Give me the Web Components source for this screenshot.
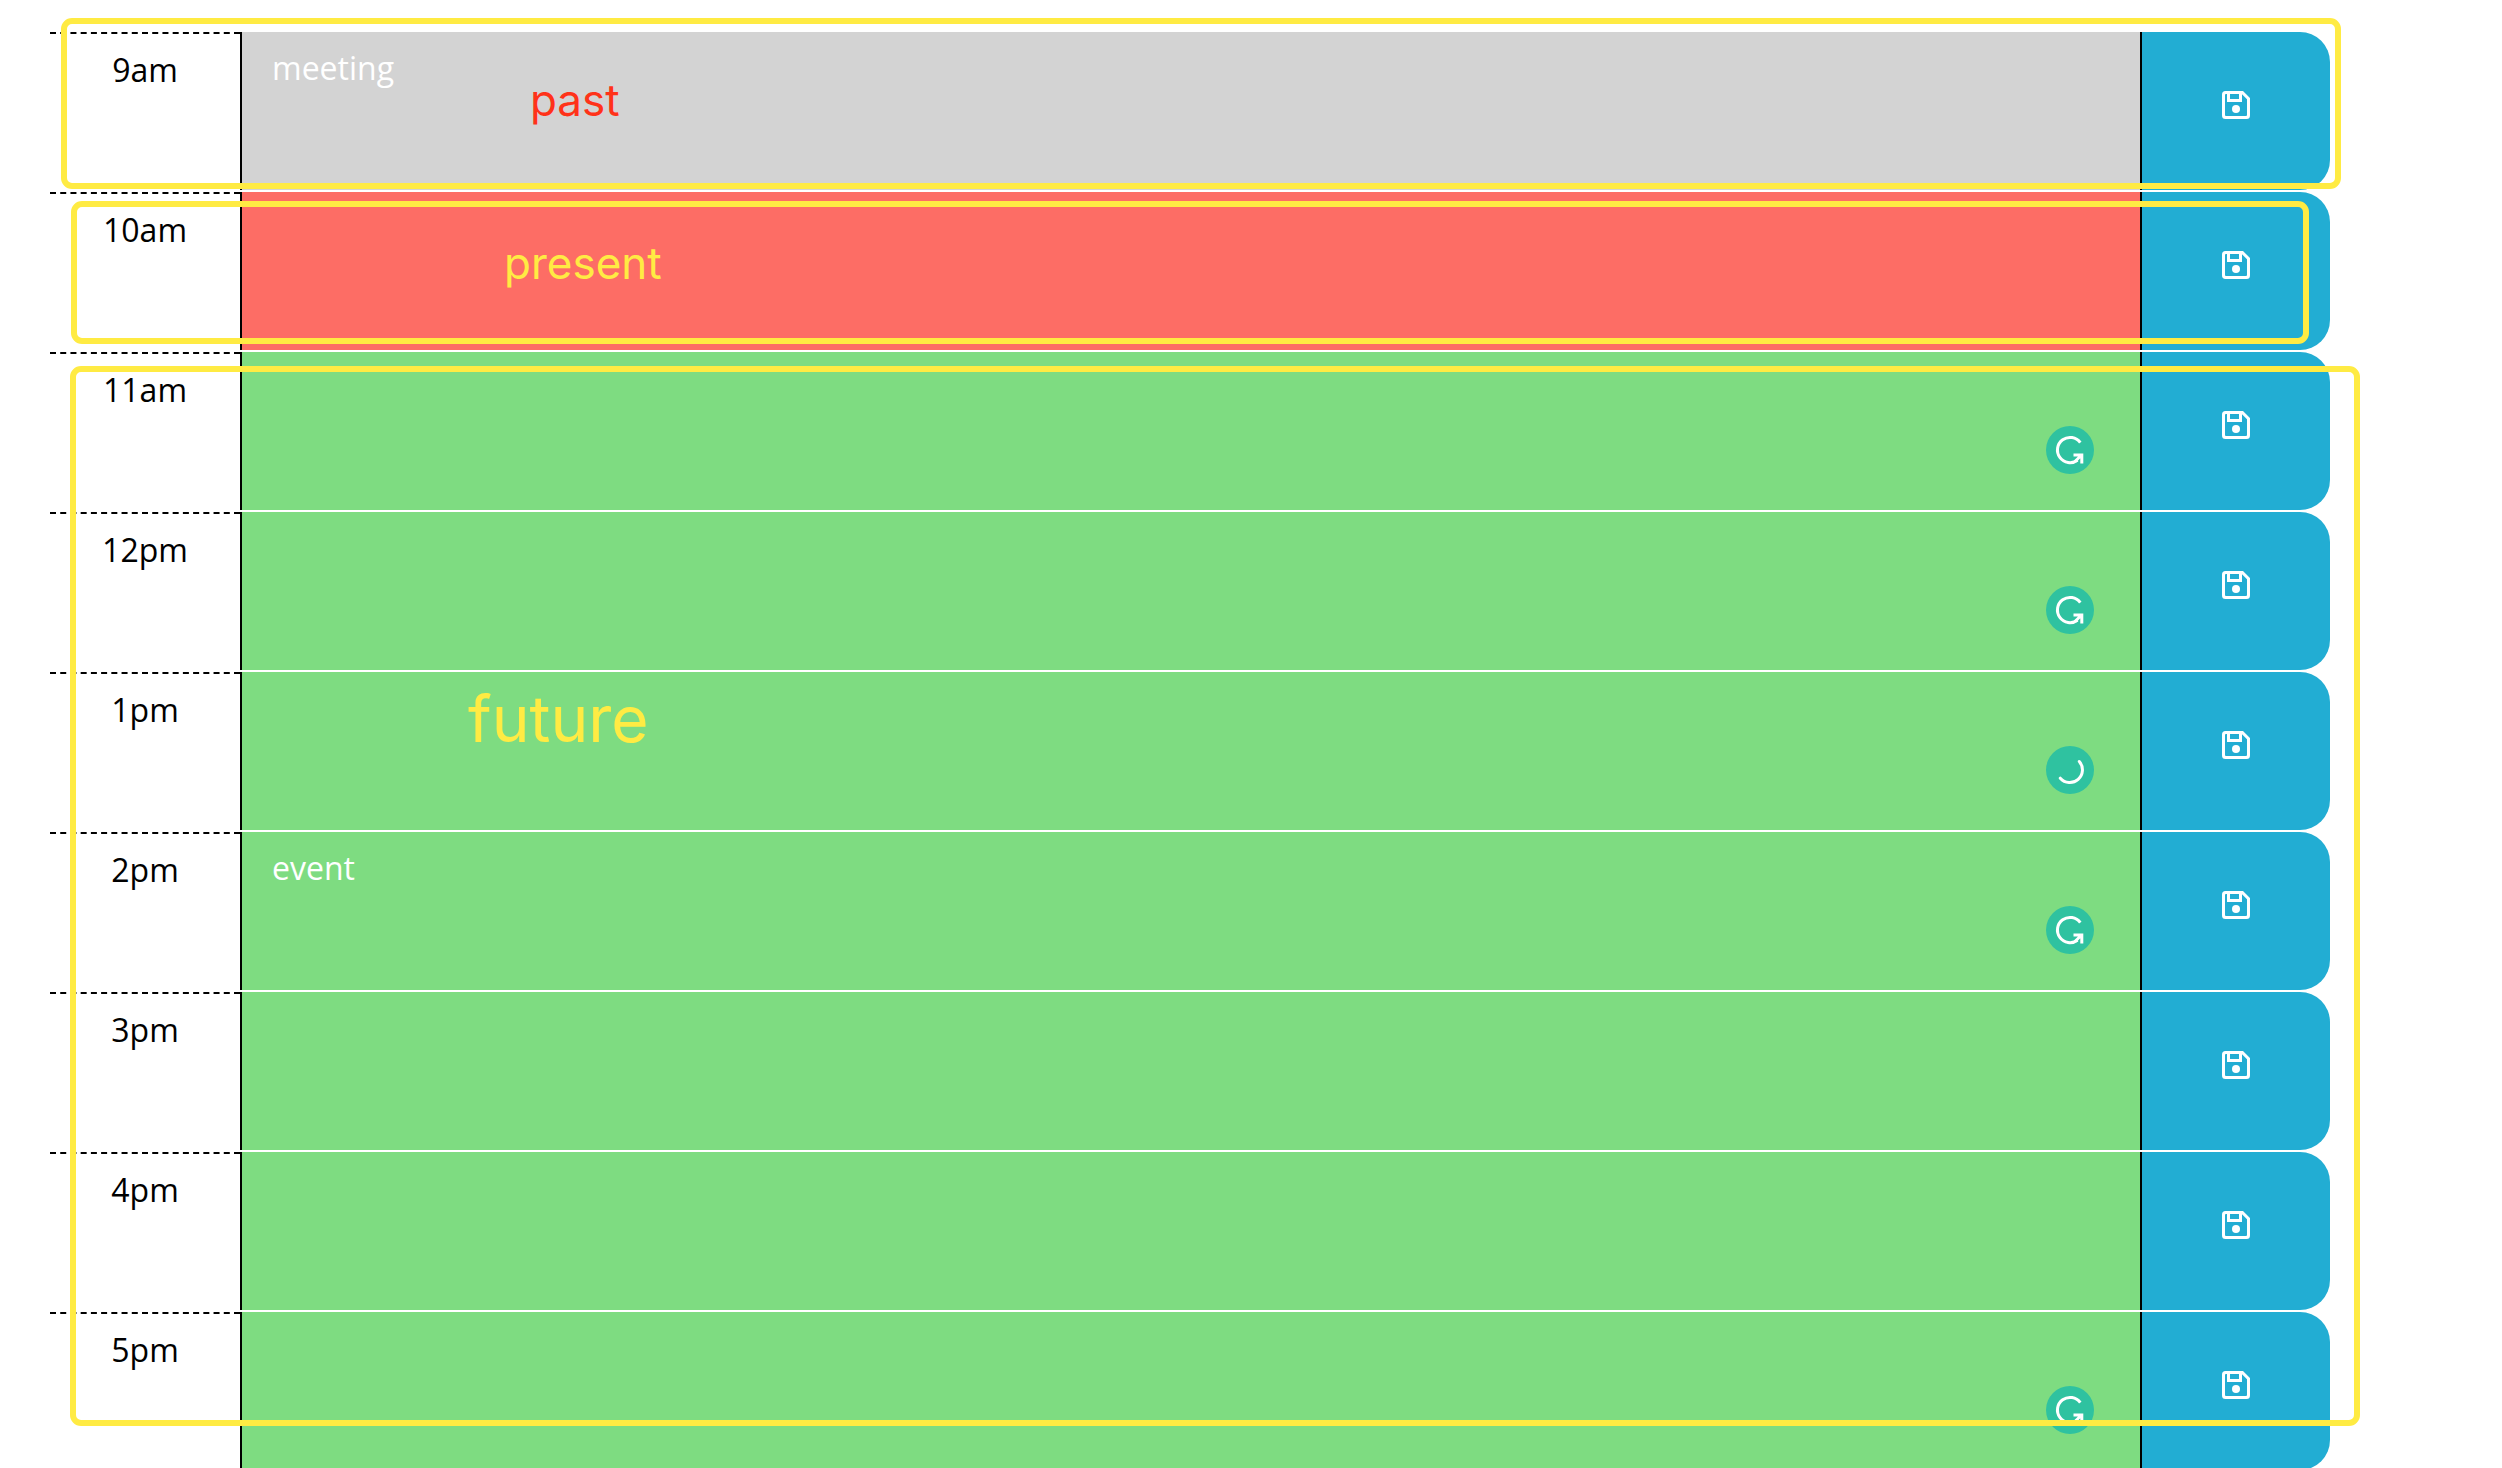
<!DOCTYPE html>
<html lang="en">
<head>
<meta charset="utf-8">
<title>Work Day Scheduler</title>
<style>
  html { scrollbar-width: none; background: #fff; }
  body { margin: 0; padding: 32px 172px 0 50px; font: 32px/48px "Open Sans", sans-serif; color: #000; }
</style>
</head>
<body>
<day-planner>
  <time-block hour="9am" state="past">meeting</time-block>
  <time-block hour="10am" state="present"></time-block>
  <time-block hour="11am" state="future" badge="g"></time-block>
  <time-block hour="12pm" state="future" badge="g"></time-block>
  <time-block hour="1pm" state="future" badge="busy"></time-block>
  <time-block hour="2pm" state="future" badge="g">event</time-block>
  <time-block hour="3pm" state="future"></time-block>
  <time-block hour="4pm" state="future"></time-block>
  <time-block hour="5pm" state="future" badge="g"></time-block>
  <mark-box slot="notes" class="past"><span>past</span></mark-box>
  <mark-box slot="notes" class="present"><span>present</span></mark-box>
  <mark-box slot="notes" class="future"><span>future</span></mark-box>
</day-planner>

<script>
class DayPlanner extends HTMLElement {
  constructor() {
    super();
    this.attachShadow({ mode: 'open' }).innerHTML = `
      <style>
        :host { display: block; position: relative; }
        main { display: flex; flex-direction: column; gap: 2px; }
        ::slotted(mark-box) { position: absolute; }
        ::slotted(.past) { left: 11px; right: -11px; top: -14px; height: 171px; --ink: #ff3219; --size: 44px; --x: 463px; --y: 50px; }
        ::slotted(.present) { left: 21px; right: 21px; top: 169px; height: 143px; --size: 44px; --x: 427px; --y: 30px; }
        ::slotted(.future) { left: 20px; right: -30px; top: 334px; height: 1060px; --size: 64px; --x: 392px; --y: 309px; }
      </style>
      <main><slot></slot></main>
      <slot name="notes"></slot>`;
  }
}

class MarkBox extends HTMLElement {
  constructor() {
    super();
    this.attachShadow({ mode: 'open' }).innerHTML = `
      <style>
        :host { display: block; box-sizing: border-box; border: 6px solid #ffeb43; border-radius: 11px;
          padding: var(--y) 0 0 var(--x); pointer-events: none;
          color: var(--ink, #ffeb43); font: var(--size)/1.2 Inter, sans-serif; }
      </style>
      <slot></slot>`;
  }
}

class SaveIcon extends HTMLElement {
  constructor() {
    super();
    this.attachShadow({ mode: 'open' }).innerHTML = `
      <style>:host { display: block; width: 28px; height: 28px; } svg { display: block; }</style>
      <svg width="28" height="28" viewBox="0 0 28 28" fill="#fff" aria-hidden="true">
        <path fill-rule="evenodd" d="M4 0H21L28 7V24.500a3.500 3.500 0 0 1-3.500 3.500H3.500A3.500 3.500 0 0 1 0 24.500V3.500A3.500 3.500 0 0 1 3.500 0zM4 3a1 1 0 0 0-1 1V24a1 1 0 0 0 1 1H24a1 1 0 0 0 1-1V8.300L20 3.300V11H5V3zM8 3V8H17V3z"/>
        <circle cx="14" cy="18" r="4"/>
      </svg>`;
  }
}

class WritingBadge extends HTMLElement {
  connectedCallback() {
    const busy = this.getAttribute('kind') === 'busy';
    const drawing = busy
      ? '<path d="M33.300 15.500A12.600 12.600 0 0 1 14.300 32.200"/>'
      : '<path d="M34.300 16.700A12.600 12.600 0 1 0 31.500 34.200"/><path d="M27.500 29H35.800V37.500M35 29.500L29 35.500"/>';
    this.attachShadow({ mode: 'open' }).innerHTML = `
      <style>:host { display: block; width: 48px; height: 48px; } svg { display: block; }</style>
      <svg width="48" height="48" viewBox="0 0 48 48" fill="none" stroke="#fff" stroke-width="3" aria-hidden="true">
        <circle cx="24" cy="24" r="24" fill="#2fc2a0" stroke="none"/>${drawing}
      </svg>`;
    if (busy) this.shadowRoot.querySelector('path').setAttribute('stroke-linecap', 'round');
  }
}

class TimeBlock extends HTMLElement {
  connectedCallback() {
    const hour = this.getAttribute('hour');
    const badge = this.getAttribute('badge');
    this.attachShadow({ mode: 'open' }).innerHTML = `
      <style>
        :host { display: grid; grid-template-columns: 1fr 10fr 1fr; min-height: 158px; }
        :host([state="past"]) { --fill: #d3d3d3; }
        :host([state="present"]) { --fill: #fd6d65; }
        :host([state="future"]) { --fill: #7edc81; }
        label { border-top: 2px dashed #000; padding-top: 12px; text-align: center; }
        .entry { position: relative; display: flex; min-width: 0; }
        textarea { flex: 1; min-width: 0; box-sizing: border-box; height: 100%; margin: 0; padding: 12px 30px;
          border: 0; border-left: 2px solid #000; border-radius: 0; outline: 0; resize: none; overflow: hidden;
          background: var(--fill); color: #fff; font: inherit; }
        writing-badge { position: absolute; right: 46px; bottom: 36px; }
        button { display: flex; align-items: center; justify-content: center; margin: 0; padding: 0 0 12px;
          border: 0; border-left: 2px solid #000; border-radius: 0 30px 30px 0; background: #22add3; cursor: pointer; }
      </style>
      <label for="entry">${hour}</label>
      <div class="entry">
        <textarea id="entry" spellcheck="false"></textarea>
        ${badge ? `<writing-badge kind="${badge}"></writing-badge>` : ''}
      </div>
      <button type="button" aria-label="Save ${hour}"><save-icon></save-icon></button>`;
    this.shadowRoot.querySelector('textarea').textContent = this.textContent.trim();
  }
}

customElements.define('save-icon', SaveIcon);
customElements.define('writing-badge', WritingBadge);
customElements.define('time-block', TimeBlock);
customElements.define('mark-box', MarkBox);
customElements.define('day-planner', DayPlanner);
</script>
</body>
</html>
